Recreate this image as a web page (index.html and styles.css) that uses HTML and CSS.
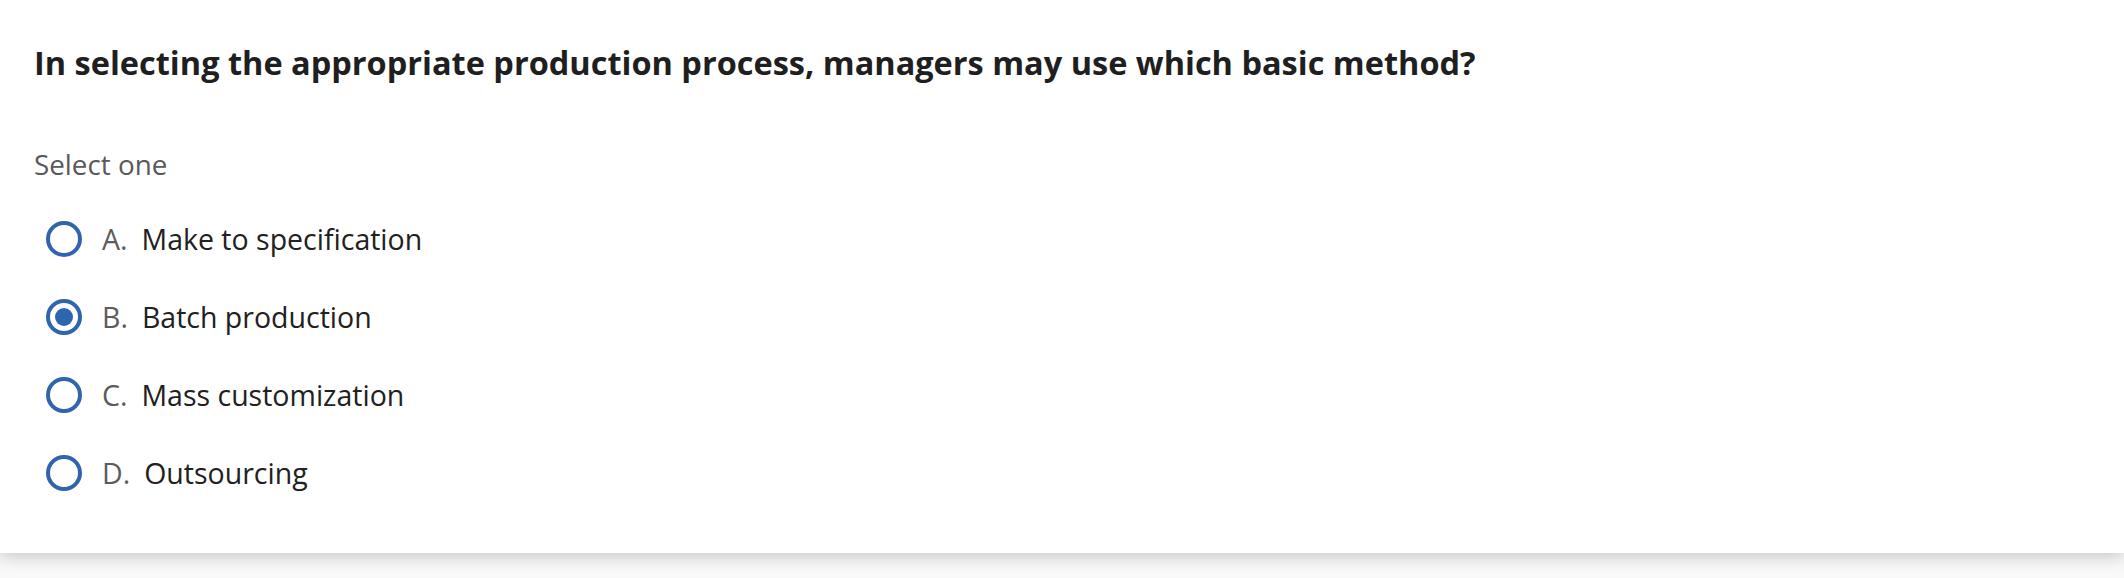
FILE: index.html
```html
<!DOCTYPE html>
<html lang="en">
<head>
    <meta charset="UTF-8">
    <meta name="viewport" content="width=device-width, initial-scale=1.0">
    <title>Question</title>
    <link rel="stylesheet" href="styles.css">
</head>
<body>
    <div class="card">
        <h1 class="question">In selecting the appropriate production process, managers may use which basic method?</h1>
        <p class="hint">Select one</p>
        <ul class="options">
            <li class="option">
                <span class="radio"></span>
                <span class="letter">A.</span>
                <span class="text">Make to specification</span>
            </li>
            <li class="option">
                <span class="radio checked"></span>
                <span class="letter">B.</span>
                <span class="text">Batch production</span>
            </li>
            <li class="option">
                <span class="radio"></span>
                <span class="letter">C.</span>
                <span class="text">Mass customization</span>
            </li>
            <li class="option">
                <span class="radio"></span>
                <span class="letter">D.</span>
                <span class="text">Outsourcing</span>
            </li>
        </ul>
    </div>
</body>
</html>
```

FILE: styles.css
```css
body {
    margin: 0;
    padding: 0;
    font-family: 'Open Sans', 'Noto Sans', sans-serif;
    background: #f9f9f9;
    height: 578px;
    overflow: hidden;
}

.card {
    background: #fff;
    padding: 41px 34px 56px;
    box-shadow: 0 4px 16px rgba(0, 0, 0, 0.2);
}

.question {
    margin: 0;
    font-size: 32.5px;
    line-height: 44px;
    font-weight: 700;
    color: #1f1f1f;
}

.hint {
    margin: 61px 0 0;
    font-size: 27.8px;
    line-height: 36px;
    color: #595959;
}

.options {
    list-style: none;
    margin: 33px 0 0;
    padding: 0;
    display: flex;
    flex-direction: column;
    gap: 30px;
}

.option {
    display: flex;
    align-items: center;
    height: 48px;
    padding-left: 12px;
    font-size: 28.5px;
    line-height: 48px;
}

.radio {
    box-sizing: border-box;
    flex: none;
    width: 36px;
    height: 36px;
    border: 4px solid #2f65ad;
    border-radius: 50%;
    margin-right: 20px;
    display: flex;
    align-items: center;
    justify-content: center;
}

.radio.checked::after {
    content: '';
    width: 18px;
    height: 18px;
    border-radius: 50%;
    background: #2f65ad;
}

.letter {
    color: #5c5c5c;
    margin-right: 14px;
}

.text {
    color: #212121;
}
```
